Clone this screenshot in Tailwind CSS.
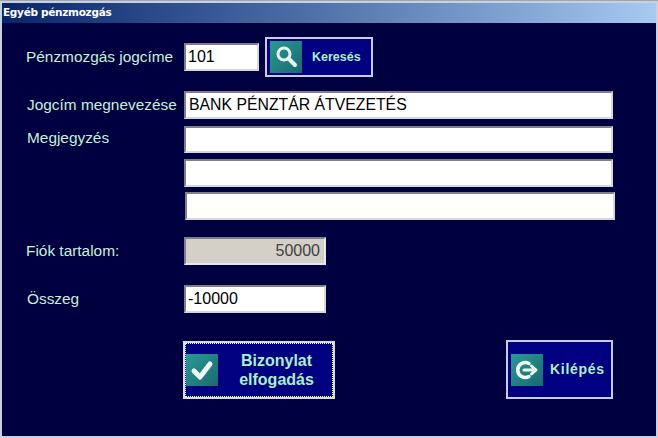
<!DOCTYPE html>
<html>
<head>
    <meta charset="UTF-8">
    <title>Egyéb pénzmozgás</title>
    <script src="https://cdn.jsdelivr.net/npm/@tailwindcss/browser@4"></script>
</head>
<body class="bg-[#c8d0e4]">
    <div class="w-[658px] h-[438px] overflow-hidden flex flex-col font-['Liberation_Sans',sans-serif] pt-[2px] px-[2px] pb-[2px] border-t border-[#9fa8a8]">
        <!-- title bar -->
        <div class="h-[20px] shrink-0 flex items-center pl-[1px] pb-[1px] bg-gradient-to-r from-[#0a246a] to-[#a6caf0] text-white text-[10.5px] font-bold font-['DejaVu_Sans',sans-serif] tracking-[-0.3px]">Egyéb pénzmozgás</div>

        <div class="flex-1 bg-[#000040] flex flex-col text-[#c6f0d8]">
            <!-- jogcim -->
            <div class="flex items-center mt-[14px] h-[40px]">
                <div class="w-[182px] pl-[24px] text-[15.4px]">Pénzmozgás jogcíme</div>
                <div class="w-[75px] h-[28px] bg-white border-2 border-t-[#80808c] border-l-[#80808c] border-r-[#d8d8d8] border-b-[#d8d8d8] text-black text-[16px] leading-[24px] pl-[2px]">101</div>
                <div class="ml-[6px] w-[108px] h-[40px] bg-[#000080] border-2 border-[#c8cce8] flex items-center pl-[3px]">
                    <div class="w-[32px] h-[32px] bg-gradient-to-br from-[#2a9a94] to-[#1a6a70] flex items-center justify-center">
                        <svg width="26" height="26" viewBox="0 0 26 26" fill="none" stroke="#e8f4f0"><circle cx="11" cy="10" r="6" stroke-width="3"/><path d="M15.5 14.5 L22 21" stroke-width="4" stroke-linecap="round"/></svg>
                    </div>
                    <span class="ml-[10px] text-[12.5px] font-bold text-[#a8f0c8]">Keresés</span>
                </div>
            </div>

            <div class="flex items-center mt-[14px] h-[28px]">
                <div class="w-[182px] pl-[25px] text-[15.4px]">Jogcím megnevezése</div>
                <div class="w-[429px] h-[28px] bg-white border-2 border-t-[#80808c] border-l-[#80808c] border-r-[#d8d8d8] border-b-[#d8d8d8] text-black text-[15.8px] leading-[24px] pl-[3px]">BANK PÉNZTÁR ÁTVEZETÉS</div>
            </div>

            <div class="flex items-start mt-[7px] h-[27px]">
                <div class="w-[182px] pl-[25px] text-[15.4px] leading-[24px]">Megjegyzés</div>
                <div class="w-[429px] h-[27px] bg-white border-2 border-t-[#80808c] border-l-[#80808c] border-r-[#d8d8d8] border-b-[#d8d8d8]"></div>
            </div>
            <div class="ml-[182px] mt-[6px] w-[429px] h-[28px] bg-[#fffffd] border-2 border-t-[#80808c] border-l-[#80808c] border-r-[#d8d8d8] border-b-[#d8d8d8]"></div>
            <div class="ml-[183px] mt-[5px] w-[430px] h-[28px] bg-[#fffffd] border-2 border-t-[#80808c] border-l-[#80808c] border-r-[#d8d8d8] border-b-[#d8d8d8]"></div>

            <div class="flex items-center mt-[17px] h-[28px]">
                <div class="w-[182px] pl-[24px] text-[15.4px]">Fiók tartalom:</div>
                <div class="w-[142px] h-[28px] bg-[#d4d0c8] border-2 border-t-[#80808c] border-l-[#80808c] border-r-[#e8e8e8] border-b-[#e8e8e8] text-[#404040] text-[16px] leading-[24px] text-right pr-[4px]">50000</div>
            </div>

            <div class="flex items-center mt-[20px] h-[28px]">
                <div class="w-[182px] pl-[25px] text-[15.4px]">Összeg</div>
                <div class="w-[142px] h-[28px] bg-white border-2 border-t-[#80808c] border-l-[#80808c] border-r-[#d8d8d8] border-b-[#d8d8d8] text-black text-[16px] leading-[24px] pl-[2px]">-10000</div>
            </div>

            <!-- buttons -->
            <div class="flex items-start mt-[27px]">
                <div class="ml-[181px] mt-[1px] w-[152px] h-[58px] bg-[#000080] border-2 border-[#d8dce8] outline outline-1 outline-dotted outline-offset-[-3px] outline-white flex items-center pl-[1px]">
                    <div class="w-[32px] h-[32px] bg-gradient-to-br from-[#2a9a94] to-[#1a6a70] flex items-center justify-center">
                        <svg width="24" height="24" viewBox="0 0 24 24" fill="none" stroke="#f0f8f4" stroke-width="5" stroke-linecap="round" stroke-linejoin="round"><path d="M4 13 L10 19 L20 6"/></svg>
                    </div>
                    <span class="flex-1 text-center text-[16px] leading-[19px] font-bold text-[#a8f0c8] pl-[2px]">Bizonylat<br>elfogadás</span>
                </div>
                <div class="ml-[171px] w-[107px] h-[59px] bg-[#000080] border-2 border-[#c8cce8] flex items-center pl-[3px]">
                    <div class="w-[32px] h-[32px] bg-gradient-to-br from-[#2a9a94] to-[#1a6a70] flex items-center justify-center">
                        <svg width="26" height="26" viewBox="0 0 26 26" fill="none" stroke="#f0f8f4" stroke-linecap="round"><path d="M15 6.5 A7.5 7.5 0 1 0 15 19.5" stroke-width="3.5"/><path d="M10 13 H21 M17.5 9 L22 13 L17.5 17" stroke-width="3" stroke-linejoin="round"/></svg>
                    </div>
                    <span class="ml-[7px] text-[14px] font-bold tracking-[0.7px] text-[#a8f0c8]">Kilépés</span>
                </div>
            </div>
        </div>
    </div>
</body>
</html>
